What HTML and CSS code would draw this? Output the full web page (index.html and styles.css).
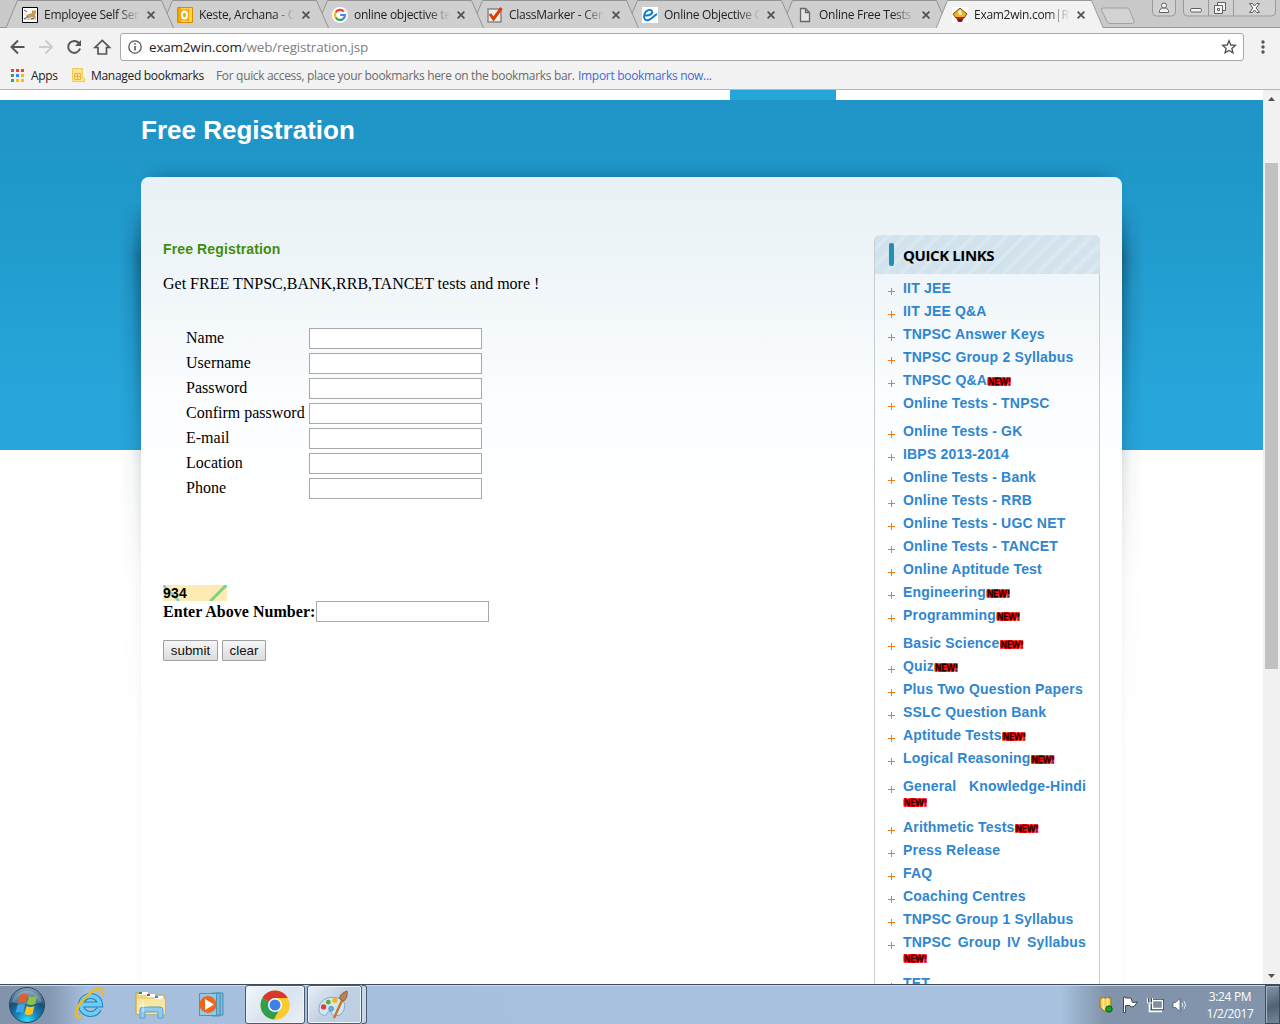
FILE: index.html
```html
<!DOCTYPE html>
<html lang="en">
<head>
<meta charset="utf-8">
<title>Exam2win.com|Registration</title>
<link rel="stylesheet" href="styles.css">
</head>
<body>
<svg class="defs" width="0" height="0" aria-hidden="true">
  <symbol id="tab-shape" viewBox="0 0 168 28"><path d="M0 28L11.500 .5H155.500L167.500 28" fill="#cfcfcf" stroke="#949494"/></symbol>
  <symbol id="tab-active" viewBox="0 0 168 28"><path d="M0 28.500L11.500 .5H155.500L167.500 28.500" fill="#f2f2f2" stroke="#999"/></symbol>
  <symbol id="close" viewBox="0 0 8 8"><path d="M.6.6l6.800 6.800M7.400.6L.6 7.400" stroke="#505050" stroke-width="1.700" fill="none"/></symbol>
</svg>

<header class="tabs">
  <div class="tab"><svg class="shape"><use href="#tab-shape"/></svg>
    <svg class="fav" viewBox="0 0 16 16"><path d="M.5.5h15v15H.5z" fill="#fff" stroke="#000"/><path d="M2 11.500h12v1H2z" fill="#9aa"/><path d="M2 6l2 2 3-1 3-1 0-3 2 1 2-1 0 3-1 2 1 3-2 0-2-1-3 1-3 0 2-2-3-1z" fill="#c99a4c"/><path d="M2 3l3 2M2 12l4-3M9 12l3-1" stroke="#456"/></svg>
    <span class="label">Employee Self Ser</span><svg class="x"><use href="#close"/></svg></div>
  <div class="tab"><svg class="shape"><use href="#tab-shape"/></svg>
    <svg class="fav" viewBox="0 0 16 16"><path d="M.5.5h15v15H.5z" fill="#f3a400" stroke="#d98d00"/><path d="M4 1h11v14H4z" fill="#ffd34a"/><path d="M2 3l10-1v12L2 13z" fill="#f5a90c"/><ellipse cx="7.500" cy="8" rx="2.500" ry="3.500" fill="none" stroke="#fff" stroke-width="2"/></svg>
    <span class="label">Keste, Archana - O</span><svg class="x"><use href="#close"/></svg></div>
  <div class="tab"><svg class="shape"><use href="#tab-shape"/></svg>
    <svg class="fav" viewBox="0 0 16 16"><circle cx="8" cy="8" r="8" fill="#fff"/><g fill="none" stroke-width="2.200"><path d="M11.800 4.600A5 5 0 0 0 3.800 5.300" stroke="#ea4335"/><path d="M3.800 5.300a5 5 0 0 0 0 5.400" stroke="#fbbc05"/><path d="M3.800 10.700a5 5 0 0 0 7.200 1.300" stroke="#34a853"/><path d="M11 12a5 5 0 0 0 2-4H8.200" stroke="#4285f4"/></g></svg>
    <span class="label">online objective te</span><svg class="x"><use href="#close"/></svg></div>
  <div class="tab"><svg class="shape"><use href="#tab-shape"/></svg>
    <svg class="fav" viewBox="0 0 16 16"><path d="M1 2h13v13H1z" fill="#eee" stroke="#888" stroke-width="1.500"/><path d="M3 7l3.500 5L14.500 1" fill="none" stroke="#e03c00" stroke-width="3"/></svg>
    <span class="label">ClassMarker - Cer</span><svg class="x"><use href="#close"/></svg></div>
  <div class="tab"><svg class="shape"><use href="#tab-shape"/></svg>
    <svg class="fav" viewBox="0 0 16 16"><path d="M0 0h16v16H0z" fill="#fff"/><path d="M3 8.500C8 9 11 6.500 10 4.200S4 2.500 2.500 7s.5 7 4 6c3-.8 5-4 8.500-6" fill="none" stroke="#0a78d0" stroke-width="1.900"/></svg>
    <span class="label">Online Objective Q</span><svg class="x"><use href="#close"/></svg></div>
  <div class="tab"><svg class="shape"><use href="#tab-shape"/></svg>
    <svg class="fav" viewBox="0 0 16 16"><path d="M3.500 1.500h5l4 4v9h-9zM8.500 1.500v4h4" fill="#e4e4e4" stroke="#666" stroke-width="1.300"/></svg>
    <span class="label">Online Free Tests</span><svg class="x"><use href="#close"/></svg></div>
  <div class="tab active"><svg class="shape"><use href="#tab-active"/></svg>
    <svg class="fav" viewBox="0 0 16 16"><path d="M0 0h16v16H0z" fill="#fff"/><path d="M8 1l7 6-3 4H4L1 7z" fill="#f2b21e" stroke="#7c4a10"/><path d="M6 4l3-1 1 5H7z" fill="#fff3c8"/><path d="M4 10h8l-2 5H6z" fill="#8c1616"/><path d="M5 11h6" stroke="#e33"/></svg>
    <span class="label">Exam2win.com|Re</span><svg class="x"><use href="#close"/></svg></div>
  <svg class="newtab" viewBox="0 0 36 18"><path d="M3.500 1h23q2 0 3 2l4.500 11q.8 2.500-1.500 2.500H10q-2 0-3-2L1.500 3Q1 1 3.500 1z" fill="#d3d3d3" stroke="#a0a0a0"/></svg>
  <svg class="winctl" viewBox="0 0 126 18">
    <g fill="#d0d0d0" stroke="#999"><path d="M.5-1V12q0 4 4 4H19.500q4 0 4-4V-1z"/><path d="M31.500-1V12q0 4 4 4H119.500q4 0 4-4V-1zM56.500 0v16M81.500 0v16"/></g>
    <g fill="#f5f5f5" stroke="#606060"><path d="M7.500 12.500v-2l2-2.500h5l2 2.500v2z"/><circle cx="12" cy="5.500" r="2.500"/><rect x="38.500" y="8.500" width="11" height="3.500" rx="1.500"/><path d="M65.500 2.500h8v8h-8z"/><path d="M62.500 5.500h8v8h-8z"/><path d="M65.500 8.500h2v2h-2z"/><path d="M97.500 3.500h3l2 2.500 2-2.500h3L104.200 8l3.300 4.500h-3l-2-2.500-2 2.500h-3L100.800 8z"/></g>
  </svg>
</header>

<div class="toolbar">
  <svg class="nav" viewBox="0 0 104 20" fill="none" stroke-width="2">
    <path d="M17.500 10H5M11 3.500L4.500 10l6.500 6.500" stroke="#555"/>
    <path d="M32 10h12.500M38.500 3.500L45 10l-6.500 6.500" stroke="#ccc"/>
    <path d="M71.800 6A6 6 0 1 0 73 11.500" stroke="#555"/><path d="M74 3v6h-6z" fill="#555"/>
    <path d="M88 10.500h3V17h8.500v-6.500h3L95.300 3.500z" stroke="#555" stroke-width="1.700"/>
  </svg>
  <div class="omnibox">
    <svg class="info" viewBox="0 0 14 14"><circle cx="7" cy="7" r="6.200" fill="none" stroke="#555" stroke-width="1.300"/><path d="M7 6v4.500M7 3.300v1.500" stroke="#555" stroke-width="1.600"/></svg>
    <span class="url"><b>exam2win.com</b>/web/registration.jsp</span>
    <svg class="star" viewBox="0 0 16 16"><path d="M8 1.800l1.800 4.200 4.500.4-3.400 3 1 4.400L8 11.500l-3.900 2.300 1-4.400-3.400-3 4.500-.4z" fill="none" stroke="#555" stroke-width="1.400"/></svg>
  </div>
  <svg class="menu" viewBox="0 0 4 14" fill="#555"><circle cx="2" cy="2" r="1.700"/><circle cx="2" cy="7" r="1.700"/><circle cx="2" cy="12" r="1.700"/></svg>
</div>

<div class="bookmarks">
  <svg class="apps" viewBox="0 0 13 13"><path d="M0 0h3v3H0zM5 0h3v3H5zM10 0h3v3h-3z" fill="#ea4335"/><path d="M0 5h3v3H0zM0 10h3v3H0z" fill="#34a853"/><path d="M5 5h3v3H5z" fill="#4285f4"/><path d="M10 5h3v3h-3zM5 10h3v3H5zM10 10h3v3h-3z" fill="#fbbc05"/></svg>
  <span class="bm-apps">Apps</span>
  <svg class="folder" viewBox="0 0 13 14"><path d="M.5.500h10V10h2v3.500H.5z" fill="#fde293" stroke="#f0cb5a"/><path d="M2.500 5.500h6v6h-6zM5.500 5.500v6M2.500 8.500h6" fill="none" stroke="#e3b63d"/></svg>
  <span class="bm-managed">Managed bookmarks</span>
  <span class="bm-hint">For quick access, place your bookmarks here on the bookmarks bar.</span>
  <a class="bm-import">Import bookmarks now...</a>
</div>

<div class="viewport">
  <div class="page">
    <div class="topnav"><span class="navitem"></span></div>
    <div class="hero">
      <h1>Free Registration</h1>
      <div class="panel">
        <main class="content">
          <h2>Free Registration</h2>
          <p>Get FREE TNPSC,BANK,RRB,TANCET tests and more !</p>
          <div class="fields">
            <label>Name</label><input type="text">
            <label>Username</label><input type="text">
            <label>Password</label><input type="text">
            <label>Confirm password</label><input type="text">
            <label>E-mail</label><input type="text">
            <label>Location</label><input type="text">
            <label>Phone</label><input type="text">
          </div>
          <div class="captcha"><svg viewBox="0 0 64 16"><path d="M0 0l16 16" stroke="#6fcbe0" stroke-width="2.500"/><path d="M47 16.500L63.500 0" stroke="#7dd383" stroke-width="3"/></svg><span>934</span></div>
          <div class="verify"><b>Enter Above Number:</b><input type="text"></div>
          <div class="buttons"><button class="submit">submit</button><button class="clear">clear</button></div>
        </main>
        <aside class="quick">
          <h3>QUICK LINKS</h3>
          <ul>
            <li>IIT JEE</li>
            <li>IIT JEE Q&amp;A</li>
            <li>TNPSC Answer Keys</li>
            <li>TNPSC Group 2 Syllabus</li>
            <li>TNPSC Q&amp;A<i>NEW!</i></li>
            <li class="last">Online Tests - TNPSC</li>
            <li>Online Tests - GK</li>
            <li>IBPS 2013-2014</li>
            <li>Online Tests - Bank</li>
            <li>Online Tests - RRB</li>
            <li>Online Tests - UGC NET</li>
            <li>Online Tests - TANCET</li>
            <li>Online Aptitude Test</li>
            <li>Engineering<i>NEW!</i></li>
            <li class="last">Programming<i>NEW!</i></li>
            <li>Basic Science<i>NEW!</i></li>
            <li>Quiz<i>NEW!</i></li>
            <li>Plus Two Question Papers</li>
            <li>SSLC Question Bank</li>
            <li>Aptitude Tests<i>NEW!</i></li>
            <li class="last">Logical Reasoning<i>NEW!</i></li>
            <li class="wrap"><span>General Knowledge-Hindi</span><i>NEW!</i></li>
            <li>Arithmetic Tests<i>NEW!</i></li>
            <li>Press Release</li>
            <li>FAQ</li>
            <li>Coaching Centres</li>
            <li>TNPSC Group 1 Syllabus</li>
            <li class="wrap"><span>TNPSC Group IV Syllabus</span><i>NEW!</i></li>
            <li>TET</li>
          </ul>
        </aside>
      </div>
    </div>
  </div>
  <div class="scrollbar">
    <svg viewBox="0 0 7 4"><path d="M0 4L3.500 0 7 4z" fill="#505050"/></svg>
    <div class="thumb"></div>
    <svg viewBox="0 0 7 4"><path d="M0 0l3.500 4L7 0z" fill="#505050"/></svg>
  </div>
</div>

<footer class="taskbar">
  <svg class="start" viewBox="0 0 38 38">
    <defs><radialGradient id="orb" cx=".5" cy=".95" r=".9"><stop offset="0" stop-color="#2fe0ff"/><stop offset=".35" stop-color="#1685bd"/><stop offset=".7" stop-color="#1c4d75"/><stop offset="1" stop-color="#7f9cb5"/></radialGradient></defs>
    <circle cx="19" cy="19" r="17.500" fill="url(#orb)" stroke="#28445f"/>
    <path d="M4 16a15.500 15 0 0 1 30 0q-15 5-30 0z" fill="#fff" opacity=".25"/>
    <path d="M12 9q4-2 7.500 0l-2 8q-4-2-7.500 0z" fill="#ee5a24"/><path d="M21 10q4 2 8 0l-2 8q-4 2-8 0z" fill="#8cc63f"/><path d="M9.500 19q4-2 7.500 0l-2 8q-4-2-7.500 0z" fill="#41a5e8"/><path d="M18.500 20q4 2 8 0l-2 8q-4 2-8 0z" fill="#fcc419"/>
  </svg>
  <svg class="ie" viewBox="0 0 32 32">
    <path d="M25 21a9.500 9 0 1 1 1-4.500H9" fill="none" stroke="#1c7fc0" stroke-width="6"/><path d="M25 21a9.500 9 0 1 1 1-4.500H9" fill="none" stroke="#6cccf2" stroke-width="4"/>
    <path d="M7 29C-2 31 2 18 13 8S31-1 28 8" fill="none" stroke="#f2b91b" stroke-width="2.500"/>
  </svg>
  <svg class="explorer" viewBox="0 0 32 32">
    <path d="M1 4h10l2 2h15q2 0 2 2v17H1z" fill="#efd57b" stroke="#c9a548"/><path d="M4 3h9v3H4z" fill="#fff"/><path d="M4 3h3v2H4z" fill="#1aa034"/><path d="M12 5h8v3h-8z" fill="#fff"/><path d="M12 5h3v2h-3z" fill="#d33"/><path d="M20 7h8v3h-8z" fill="#fff"/><path d="M20 7h3v2h-3z" fill="#38d"/><path d="M2 10h28v15H2z" fill="#f8e7a2"/><path d="M5 29V21q0-3 3-3h17q3 0 3 3v8h-5v-6H10v6z" fill="#8ecbec" stroke="#5c9fc8"/>
    <path d="M8 11v12M3 17h10" stroke="#fff" opacity=".7"/>
  </svg>
  <svg class="wmp" viewBox="0 0 30 28">
    <path d="M18 2h7v22h-7zM14 2h8v23h-8z" fill="#78b9dc" stroke="#4a90b8"/><path d="M1.500 2.500h17v22h-17z" fill="#8ecbea" stroke="#4a93bc"/><circle cx="10" cy="13.500" r="8.500" fill="#f0661b"/><path d="M7 8l9 5.500L7 19z" fill="#fff"/>
  </svg>
  <div class="task chrome">
    <svg viewBox="0 0 30 30"><circle cx="15" cy="15" r="14.500" fill="#fccb30"/><path d="M15 15L2.300 8A14.500 14.500 0 0 1 27.700 8z" fill="#d9392b"/><path d="M2.300 8A14.500 14.500 0 0 0 14 29.500L20.500 18 15 15z" fill="#2f9e4e"/><path d="M27.700 8H15v7l5.500 3-6.500 11.500A14.500 14.500 0 0 0 27.700 8z" fill="#fccb30"/><circle cx="15" cy="15" r="7" fill="#fff"/><circle cx="15" cy="15" r="5.500" fill="#3f7fe8"/></svg>
  </div>
  <div class="task paint">
    <svg viewBox="0 0 34 32"><path d="M2 20C2 11 11 7 19 8s12 5 10 12-7 8-11 7-1-5-5-4-1 4-5 4-6-3-6-7z" fill="#cfe6f3" stroke="#7aa6c2"/><circle cx="7" cy="18" r="2.800" fill="#e33b34"/><circle cx="12" cy="13" r="2.500" fill="#58ac3a"/><circle cx="19" cy="11" r="2.800" fill="#f2b61c"/><circle cx="15" cy="20" r="2.500" fill="#78b0d8" stroke="#4a86b5"/><path d="M28 8L18 30" stroke="#cf7121" stroke-width="2.500"/><path d="M24 9q0-5 8-8 1 8-4 11z" fill="#b98250" stroke="#8d5c31"/></svg>
  </div>
  <div class="stack"></div>
  <div class="tray">
    <svg class="shield" viewBox="0 0 14 16"><path d="M1 1h11v9l-4 4H5l-4-4z" fill="#f5cc55" stroke="#99701b"/><path d="M4.500 1v11M8.500 1v11" stroke="#fff0ae" stroke-width="1.500"/><circle cx="10" cy="12" r="3.200" fill="#14a323" stroke="#075c10"/></svg>
    <svg class="flag" viewBox="0 0 17 17"><path d="M1.500 1v15.500h2V9.500h4.500l1 1.500 3-.5 3.500-4.500-5 .5L9 2H3.500V1z" fill="#fff" stroke="#3c4653"/></svg>
    <svg class="net" viewBox="0 0 16 16"><path d="M5.500 3.500h10v8h-10z" fill="#7f8e9e" stroke="#333f4d" stroke-width="3"/><path d="M5.500 3.500h10v8h-10z" fill="#7f8e9e" stroke="#fff" stroke-width="1.300"/><path d="M7 14.500h8M2.500 7v7.500H7" stroke="#fff" stroke-width="1.600" fill="none"/><path d="M.5 1v5h5V1M3 1v5" stroke="#fff" fill="#414e5d"/></svg>
    <svg class="sound" viewBox="0 0 16 16"><path d="M1 5.500h2.500L8 1.500v13l-4.500-4H1z" fill="#fff" stroke="#3e4a58" stroke-width=".7"/><path d="M10 6q1.500 2 0 4M12 4q3 4 0 8" stroke="#dfe6ee" fill="none"/></svg>
    <div class="clock"><span>3:24 PM</span><span>1/2/2017</span></div>
    <div class="showdesk"></div>
  </div>
</footer>
</body>
</html>
```
FILE: styles.css
```css
* { box-sizing: border-box; }
body {
  margin: 0; width: 1280px; height: 1024px; overflow: hidden;
  display: flex; flex-direction: column;
  font: 12px "Open Sans", "Noto Sans", sans-serif; color: #222; background: #fff;
}
svg { display: block; flex: none; overflow: visible; }
.defs { position: absolute; }

/* browser tabs */
.tabs { height: 28px; background: #c9c9c9; border-bottom: 1px solid #999; display: flex; padding-left: 6px; flex: none; }
.tab { width: 168px; height: 28px; margin-right: -13px; display: grid; grid-template-columns: 16px 16px 6px 93px 10px 8px; align-items: center; flex: none; }
.tab > * { grid-row: 1; }
.shape { grid-column: 1 / -1; width: 168px; height: 28px; justify-self: start; }
.tab:nth-child(1) { z-index: 7; } .tab:nth-child(2) { z-index: 6; } .tab:nth-child(3) { z-index: 5; }
.tab:nth-child(4) { z-index: 4; } .tab:nth-child(5) { z-index: 3; } .tab:nth-child(6) { z-index: 2; }
.tab, .tab.active { position: relative; }
.tab.active { z-index: 9; }
.fav { grid-column: 2; width: 16px; height: 16px; margin-top: 2px; }
.label {
  grid-column: 4; width: 100px; white-space: nowrap; line-height: 18px; margin-top: 2px;
  letter-spacing: -.28px;
  mask-image: linear-gradient(90deg, #000 74px, transparent 96px);
}
.x { grid-column: 6; width: 8px; height: 8px; margin-top: 2px; }
.newtab { width: 36px; height: 18px; margin: 7px 0 0 9px; }
.winctl { width: 126px; height: 18px; margin-left: 16px; }

/* toolbar */
.toolbar { height: 37px; background: #f2f2f2; display: flex; align-items: center; flex: none; padding: 1px 0 0 7px; }
.nav { width: 104px; height: 20px; }
.omnibox { margin-left: 9px; width: 1124px; height: 28px; border: 1px solid #a9a9a9; border-radius: 3px; background: #fff; display: flex; align-items: center; padding: 0 6px 0 7px; }
.info { width: 14px; height: 14px; }
.url { flex: 1; margin-left: 7px; font-size: 13.500px; letter-spacing: -.2px; color: #808080; line-height: 20px; }
.url b { font-weight: 400; color: #222; }
.star { width: 16px; height: 16px; }
.menu { width: 4px; height: 14px; margin-left: 17px; }

.bookmarks { height: 25px; background: #f2f2f2; border-bottom: 1px solid #b6b6b6; display: flex; align-items: center; padding: 0 0 4px 11px; flex: none; white-space: nowrap; letter-spacing: -.3px; }
.apps { width: 13px; height: 13px; }
.bm-apps { margin-left: 7px; width: 41px; }
.folder { width: 13px; height: 14px; }
.bm-managed { margin-left: 6px; width: 125px; }
.bm-hint { color: #6b6b6b; width: 362px; letter-spacing: -.33px; }
.bm-import { color: #4468d8; }

/* web page */
.viewport { height: 894px; display: flex; flex: none; overflow: hidden; }
.page { width: 1263px; overflow: hidden; }
.topnav { height: 10px; display: flex; padding-left: 730px; }
.navitem { width: 106px; background: #24a6d9; }
.hero { background: linear-gradient(#1f94c6 0, #2098ca 90px, #27a6db 300px) no-repeat 0 0 / 100% 350px; padding: 0 141px; }
h1 { margin: 0; height: 77px; padding-top: 14px; font: bold 26px/32px "Liberation Sans", Arial, sans-serif; color: #fff; }
.panel {
  position: relative; width: 981px; min-height: 900px; border-radius: 8px 8px 0 0; padding: 58px 22px 0;
  background: linear-gradient(#e8f1f5 0, #f0f6f9 110px, #fbfdfe 220px, #fff 330px);
  display: flex; justify-content: space-between;
  box-shadow: 0 -12px 16px -14px rgba(0, 30, 50, .45);
}
.panel::before, .panel::after {
  content: ""; position: absolute; top: 25px; width: 22px; height: 580px;
  mask-image: linear-gradient(transparent, #000 55px, rgba(0, 0, 0, .8) 90px, rgba(0, 0, 0, .25) 262px, rgba(0, 0, 0, .06) 380px, transparent);
}
.panel::before { right: 100%; background: linear-gradient(270deg, rgba(0, 20, 35, .4), rgba(0, 20, 35, .12) 45%, transparent); }
.panel::after { left: 100%; background: linear-gradient(90deg, rgba(0, 20, 35, .4), rgba(0, 20, 35, .12) 45%, transparent); }

.content { font: 16px/18px "Liberation Serif", "Times New Roman", serif; color: #000; }
h2 { margin: 5px 0 0; font: bold 14px/18px "Liberation Sans", Arial, sans-serif; letter-spacing: .13px; color: #438c0b; }
.content p { margin: 17px 0 0; }
.fields { display: grid; grid-template-columns: 123px 173px; grid-auto-rows: 21px; row-gap: 4px; align-items: center; margin: 35px 0 0 23px; white-space: nowrap; }
.fields label { padding-bottom: 2px; }
.content input { width: 173px; height: 21px; border: 1px solid #a9a9a9; background: #fff; padding: 0; }
.captcha { display: grid; width: 64px; height: 16px; margin-top: 86px; background: #feebb3; font: bold 14px/16px "Liberation Sans", Arial, sans-serif; }
.captcha > * { grid-area: 1 / 1; }
.captcha svg { width: 64px; height: 16px; overflow: hidden; }
.captcha span { letter-spacing: .2px; }
.verify { display: flex; }
.verify b { width: 153px; white-space: nowrap; line-height: 21px; letter-spacing: .04px; }
.buttons { display: flex; gap: 4px; margin-top: 18px; }
.buttons button { height: 21px; padding: 0; border: 1px solid #a0a0a0; border-radius: 1px; background: linear-gradient(#f6f6f6, #dcdcdc); font: 13.330px "Liberation Sans", Arial, sans-serif; color: #111; }
.submit { width: 55px; }
.clear { width: 44px; }

/* link sidebar */
.quick { width: 226px; border: 1px solid #c8cdd1; border-top: 0; border-radius: 6px 6px 0 0; }
h3 {
  margin: 0 -1px 0 0; height: 39px; display: flex; align-items: center; gap: 9px; padding-left: 14px; border-radius: 6px 6px 0 0;
  background: repeating-linear-gradient(135deg, #d2e3ed 0 8px, #dae8f0 8px 12px);
  font: bold 15px "Open Sans", "Noto Sans", sans-serif; letter-spacing: -.4px; color: #000;
}
h3::before { content: ""; width: 5px; height: 23px; border-radius: 2px; background: #2390b3; }
.quick ul { list-style: none; margin: 0; padding: 5px 13px 0; font: bold 14px/18px "Liberation Sans", Arial, sans-serif; letter-spacing: .18px; color: #2f86d0; }
.quick li {
  padding: 0 0 5px 15px; white-space: nowrap;
  background: linear-gradient(#ef7d1d, #ef7d1d) no-repeat 0 12px / 7px 1px, linear-gradient(#ef7d1d, #ef7d1d) no-repeat 3px 9px / 1px 7px;
}
.quick .last { padding-bottom: 10px; }
.quick i {
  display: inline-block; width: 25px; height: 9px; padding-left: 1px; vertical-align: 0;
  font: 8.500px/9px "DejaVu Sans", sans-serif; letter-spacing: -.2px; color: #000;
  -webkit-text-stroke: .3px #000;
  text-shadow: 1px 0 #f00, -1px 0 #f00, 0 1px #f00, 0 -1px #f00, 1px 1px #f00, -1px -1px #f00, 1px -1px #f00, -1px 1px #f00;
}
.wrap span { display: block; text-align-last: justify; }
.quick .wrap i { display: block; margin: 4px 0 5px; }

.scrollbar { width: 17px; background: #f1f1f1; display: flex; flex-direction: column; align-items: center; padding: 7px 0 6px; }
.scrollbar svg { width: 7px; height: 4px; }
.thumb { width: 13px; height: 506px; margin: 62px 0 auto; background: #c1c1c1; }

/* taskbar */
.taskbar {
  height: 40px; flex: none; border-top: 1px solid #3f4c5c; box-shadow: inset 0 1px #c9d9ea; display: flex; align-items: center; padding-left: 8px;
  background: linear-gradient(90deg, #8093aa 0, #8498b0 50px, #a6bfdc 85px, #a8c1de 1060px, #8194ab 1105px);
}
.start { width: 38px; height: 38px; }
.ie { width: 32px; height: 32px; margin: 0 0 2px 28px; }
.explorer { width: 32px; height: 32px; margin-left: 29px; }
.wmp { width: 30px; height: 28px; margin-left: 31px; }
.task { height: 39px; border: 1px solid #4b5b6e; border-radius: 3px; box-shadow: inset 0 0 0 1px #eef5fc; display: grid; place-items: center; background: linear-gradient(135deg, #e7eef6, #c0d0e4 50%, #bdcee3); }
.chrome { width: 60px; margin-left: 17px; background: linear-gradient(135deg, #f5f8fb, #d9e2ee 50%, #e9eff6); }
.chrome svg { width: 30px; height: 30px; }
.paint { width: 55px; margin-left: 2px; }
.paint svg { width: 32px; height: 30px; margin-right: 3px; }
.stack { width: 5px; height: 39px; border: 1px solid #4b5b6e; border-left: 0; border-radius: 0 3px 3px 0; background: #c7d7e9; }
.tray { margin-left: auto; height: 39px; display: flex; align-items: center; }
.shield { width: 14px; height: 16px; margin-right: 9px; }
.flag { width: 17px; height: 17px; margin-right: 8px; }
.net { width: 16px; height: 16px; margin-right: 9px; }
.sound { width: 16px; height: 16px; margin-right: 7px; }
.clock { width: 70px; display: flex; flex-direction: column; align-items: center; color: #fff; line-height: 17px; letter-spacing: -.35px; }
.showdesk { width: 15px; height: 39px; border: 1px solid #3f4b5a; box-shadow: inset 1px 1px #a3b1c2; background: linear-gradient(160deg, #8695a8, #536174 55%, #78879a); }
```
